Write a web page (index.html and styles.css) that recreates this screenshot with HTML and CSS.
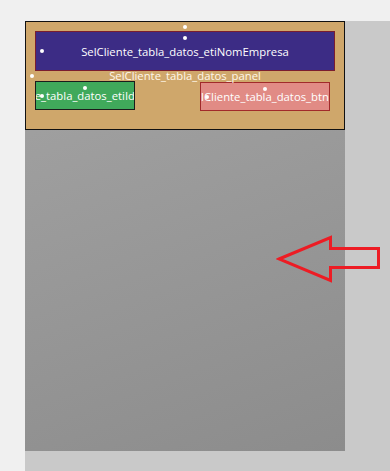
FILE: index.html
```html
<!DOCTYPE html>
<html>
<head>
	<meta charset="UTF-8">
	<title>SelCliente</title>
	<link rel="stylesheet" href="styles.css">
</head>
<body>
	<div class="stage">
		<div class="canvas">
			<div class="panel handle">
				<div class="box box-empresa handle"><span>SelCliente_tabla_datos_etiNomEmpresa</span></div>
				<div class="panel-caption">SelCliente_tabla_datos_panel</div>
				<div class="row">
					<div class="box box-id handle"><span>SelCliente_tabla_datos_etiId</span></div>
					<div class="box box-btn handle"><span>SelCliente_tabla_datos_btnSe</span></div>
				</div>
			</div>
		</div>

		<!-- flecha de aviso -->
		<svg class="arrow" width="110" height="56" viewBox="0 0 110 56">
			<polygon points="3,24 54.5,2.5 54.5,13.5 102.5,13.5 102.5,32.5 54.5,32.5 54.5,45.5" fill="none" stroke="#ed1c24" stroke-width="3" stroke-linejoin="miter"/>
		</svg>
	</div>
</body>
</html>
```

FILE: styles.css
```css
html, body {
	margin: 0;
	padding: 0;
	background-color: #f0f0f0;
	font-family: "Open Sans", "Liberation Sans", sans-serif;
	font-size: 11.3px;
}
.stage {
	position: relative;
	margin: 21px 0 0 25px;
	height: 450px;
	background-color: #c9c9c9;
}
.canvas {
	width: 320px;
	height: 430px;
	background: linear-gradient(160deg, #a4a4a4 0%, #8c8c8c 100%);
}
.panel {
	position: relative;
	box-sizing: border-box;
	width: 320px;
	height: 109px;
	padding: 9px;
	background-color: #cfa76b;
	border: 1px solid #111;
	display: flex;
	flex-direction: column;
}
.box {
	position: relative;
	box-sizing: border-box;
	display: flex;
	align-items: center;
	overflow: hidden;
	white-space: nowrap;
	color: #fff;
}
.box span {
	flex: none;
}
.box-empresa {
	width: 300px;
	height: 40px;
	justify-content: center;
	background-color: #3c2c85;
	border: 1px solid #7a1d2e;
}
.panel-caption {
	position: relative;
	z-index: 2;
	height: 10px;
	line-height: 10px;
	text-align: center;
	color: #fff8ea;
	white-space: nowrap;
}
.row {
	display: flex;
	align-items: flex-start;
}
.box-id {
	width: 100px;
	height: 29px;
	justify-content: flex-end;
	background-color: #40a95b;
	border: 1px solid #1b1b1b;
}
.box-id span {
	margin-right: -1px;
}
.box-btn {
	width: 130px;
	height: 29px;
	margin-top: 1px;
	margin-left: 65px;
	justify-content: center;
	background-color: #e18b85;
	border: 1px solid #a12a2a;
}
/* puntos de anclaje */
.handle::before,
.handle::after {
	content: "";
	position: absolute;
	z-index: 3;
	width: 4px;
	height: 4px;
	border-radius: 50%;
	background-color: #fff;
}
.handle::before {
	top: 4px;
	left: calc(50% - 2px);
}
.handle::after {
	top: calc(50% - 2px);
	left: 4px;
}
.panel.handle::before {
	top: 3px;
}
.arrow {
	position: absolute;
	left: 251px;
	top: 214px;
}
```
